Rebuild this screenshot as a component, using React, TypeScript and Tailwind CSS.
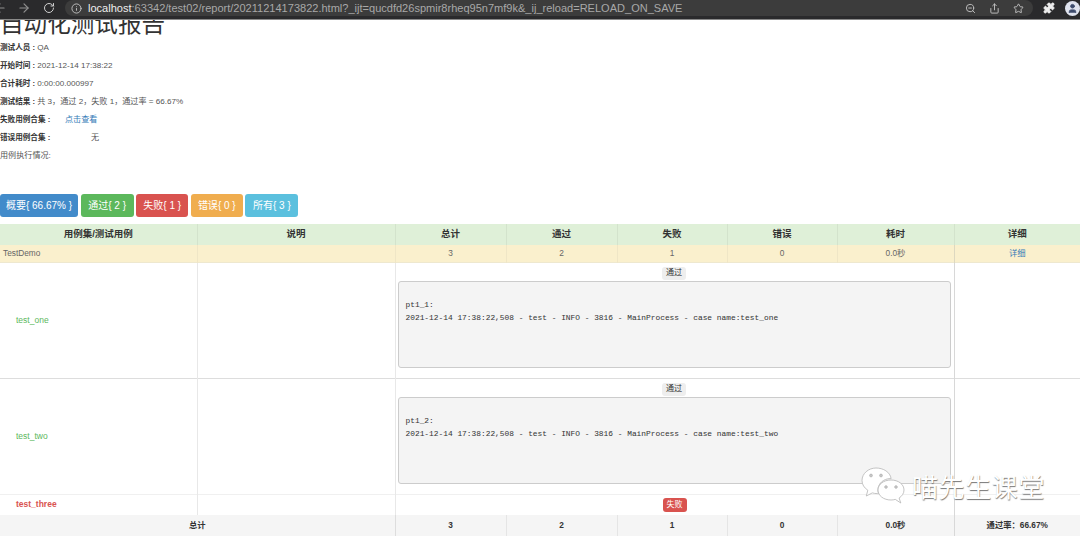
import { ArrowLeft, ArrowRight, RotateCw, Info, ZoomOut, Share, Star, Puzzle, User } from 'lucide-react'

const cjk = 'font-["Liberation_Sans","Noto_Sans_CJK_SC",sans-serif]'

function LogRow({ name, pre, line }: { name: string; pre: string; line: string }) {
  return (
    <tr className={`h-[116px] border-b ${line}`}>
      <td className="border-r border-[#e8e8e8] pl-4 text-left text-[8.5px] text-[#5cb85c]">{name}</td>
      <td className="border-r border-[#e8e8e8]" />
      <td colSpan={5} className="border-r border-[#d8d8d8] pt-1 pr-[3px] pb-[10px] pl-[2px] align-top">
        <div className="flex justify-center">
          <span className="flex h-[13px] w-6 items-center justify-center rounded-[3px] bg-[#eeeeee] text-[8px] leading-none text-[#333333]">通过</span>
        </div>
        <pre className='mt-[1px] h-[87px] rounded-[3px] border border-[#cccccc] bg-[#f4f4f4] pt-4 pl-[7px] text-left font-["Liberation_Mono",monospace] text-[7.87px] leading-[13px] text-[#333333]'>
          {pre + ':\n2021-12-14 17:38:22,508 - test - INFO - 3816 - MainProcess - case name:' + name}
        </pre>
      </td>
      <td />
    </tr>
  )
}

function Watermark() {
  return (
    <div className="absolute top-[467px] left-[861px] flex items-center gap-[7px]">
      <svg width="44" height="38" viewBox="0 0 44 38" fill="#ffffff" stroke="#b5b5b5" strokeWidth="0.8">
        <path d="M15 1C7.500 1 1 6.500 1 13.500c0 4 2.200 7.400 5.800 9.700L5.300 29l6-3.100c1.600.5 3.300.7 5 .7h1.200c-.4-1.200-.6-2.400-.6-3.700 0-6.300 5.900-11.300 12.200-11.300h1C29.200 5 22.200 1 15 1z" />
        <path d="M43 23c0-5.600-5.500-10-13-10S17 17.400 17 23s5.500 10 13 10c1.500 0 3-.2 4.300-.6l5.500 3.600-1.700-5C41 29.200 43 26.300 43 23z" />
        <circle cx="10" cy="8.500" r="1.400" fill="#c8c8c8" />
        <circle cx="20" cy="8.500" r="1.400" fill="#c8c8c8" />
        <circle cx="25" cy="20" r="1.300" fill="#c8c8c8" />
        <circle cx="35" cy="20" r="1.300" fill="#c8c8c8" />
      </svg>
      <span className='font-["Noto_Sans_CJK_SC",sans-serif] text-[26px] leading-none tracking-[0.6px] text-white [text-shadow:0.5px_0.5px_1px_#777777]'>喵先生课堂</span>
    </div>
  )
}

export default function App() {
  return (
    <div className={`relative h-[536px] w-[1080px] overflow-hidden bg-white text-[#333333] ${cjk}`}>
      {/* 浏览器地址栏 */}
      <div className="flex h-5 items-start border-b border-[#8a8a8a] bg-[#2a2a2c] text-[#c4c4c4]">
        <div className="flex h-4 items-center">
          <ArrowLeft size={14} className="-ml-[7px] text-[#8f8f8f]" />
          <ArrowRight size={14} className="ml-[10px] text-[#8f8f8f]" />
          <RotateCw size={12} className="ml-[12px] text-[#d0d0d0]" />
        </div>
        <div className="ml-[10px] flex h-4 w-[968px] items-center rounded-r-full rounded-l-full bg-[#3c3c3c] pl-[6px]">
          <Info size={11} className="text-[#c4c4c4]" />
          <span className="ml-[6px] text-[11.04px] whitespace-nowrap text-[#a8a8a8]">
            <span className="text-[#eeeeee]">localhost</span>
            :63342/test02/report/20211214173822.html?_ijt=qucdfd26spmir8rheq95n7mf9k&_ij_reload=RELOAD_ON_SAVE
          </span>
          <div className="ml-auto flex items-center gap-[13px] pr-[9px]">
            <ZoomOut size={11} />
            <Share size={11} />
            <Star size={11} />
          </div>
        </div>
        <div className="flex h-4 items-center">
          <Puzzle size={12} fill="#eeeeee" className="ml-[10px] text-[#eeeeee]" />
          <div className="ml-[10px] flex h-[15px] w-[15px] items-center justify-center rounded-full bg-[#dfe3ee]">
            <User size={11} fill="#3c4a6b" className="text-[#3c4a6b]" />
          </div>
        </div>
      </div>

      {/* 报告概要 */}
      <div className="flex h-[19px] items-end overflow-hidden pb-[3px]">
        <h1 className="text-[23.6px] leading-[24px] font-normal whitespace-nowrap text-[#333333]">自动化测试报告</h1>
      </div>
      <div className="text-[8.1px] leading-[18px] text-[#555555]">
        <p><b className="text-[7.6px] text-[#333333]">测试人员 :</b> QA</p>
        <p><b className="text-[7.6px] text-[#333333]">开始时间 :</b> 2021-12-14 17:38:22</p>
        <p><b className="text-[7.6px] text-[#333333]">合计耗时 :</b> 0:00:00.000997</p>
        <p><b className="text-[7.6px] text-[#333333]">测试结果 :</b> 共 3，通过 2，失败 1，通过率 = 66.67%</p>
        <p className="flex"><b className="w-[65px] text-[7.6px] text-[#333333]">失败用例合集 :</b><span className="text-[#337ab7]">点击查看</span></p>
        <p className="flex"><b className="w-[91px] text-[7.6px] text-[#333333]">错误用例合集 :</b><span>无</span></p>
        <p>用例执行情况:</p>
      </div>

      {/* 筛选按钮 */}
      <div className="mt-[29px] flex h-[23px] gap-[2.6px] text-[10px] text-white">
        <button className="w-[78px] rounded-[3px] bg-[#428bca]">概要{'{ 66.67% }'}</button>
        <button className="w-[53px] rounded-[3px] bg-[#5cb85c]">通过{'{ 2 }'}</button>
        <button className="w-[52px] rounded-[3px] bg-[#d9534f]">失败{'{ 1 }'}</button>
        <button className="w-[52px] rounded-[3px] bg-[#f0ad4e]">错误{'{ 0 }'}</button>
        <button className="w-[53px] rounded-[3px] bg-[#5bc0de]">所有{'{ 3 }'}</button>
      </div>

      {/* 结果表格 */}
      <table className="mt-[7px] w-[1080px] table-fixed border-collapse text-center text-[8.3px]">
        <colgroup>
          <col className="w-[197px]" />
          <col className="w-[198px]" />
          <col className="w-[111px]" />
          <col className="w-[111px]" />
          <col className="w-[110px]" />
          <col className="w-[110px]" />
          <col className="w-[117px]" />
          <col className="w-[126px]" />
        </colgroup>
        <thead>
          <tr className="h-[21px] bg-[#dff0d8] text-[9.5px]">
            {['用例集/测试用例', '说明', '总计', '通过', '失败', '错误', '耗时', '详细'].map((title) => (
              <th key={title} className="border-r border-[#d3e3cc] font-bold text-[#333333] last:border-r-0">{title}</th>
            ))}
          </tr>
        </thead>
        <tbody>
          <tr className="h-[17px] border-b border-[#eee8cf] bg-[#faf0cd] text-[#666666]">
            <td className="border-r border-[#efe6c6] pl-[3px] text-left">TestDemo</td>
            <td className="border-r border-[#efe6c6]" />
            <td className="border-r border-[#efe6c6]">3</td>
            <td className="border-r border-[#efe6c6]">2</td>
            <td className="border-r border-[#efe6c6]">1</td>
            <td className="border-r border-[#efe6c6]">0</td>
            <td className="border-r border-[#ddd8c0]">0.0秒</td>
            <td className="text-[#337ab7]">详细</td>
          </tr>
          <LogRow name="test_one" pre="pt1_1" line="border-[#dddddd]" />
          <LogRow name="test_two" pre="pt1_2" line="border-[#f0f0f0]" />
          <tr className="h-[21px]">
            <td className="border-r border-[#e8e8e8] pl-4 text-left text-[8.5px] font-bold text-[#d9534f]">test_three</td>
            <td className="border-r border-[#e8e8e8]" />
            <td colSpan={5} className="border-r border-[#d8d8d8]">
              <div className="flex justify-center">
                <span className="flex h-[14px] w-6 items-center justify-center rounded-[3px] bg-[#d9534f] text-[8px] leading-none text-white">失败</span>
              </div>
            </td>
            <td />
          </tr>
          <tr className="h-[21px] bg-[#f5f5f5] font-bold text-[#333333]">
            <td colSpan={2} className="border-r border-[#dddddd]">总计</td>
            <td className="border-r border-[#e5e5e5]">3</td>
            <td className="border-r border-[#e5e5e5]">2</td>
            <td className="border-r border-[#e5e5e5]">1</td>
            <td className="border-r border-[#e5e5e5]">0</td>
            <td className="border-r border-[#d8d8d8]">0.0秒</td>
            <td>通过率：66.67%</td>
          </tr>
        </tbody>
      </table>

      <Watermark />
    </div>
  )
}
